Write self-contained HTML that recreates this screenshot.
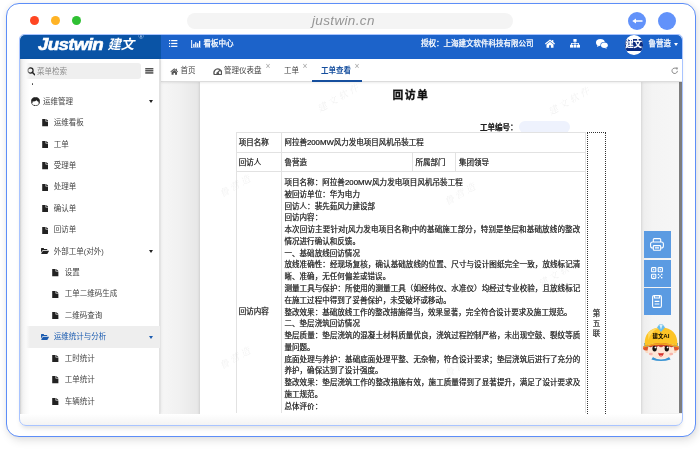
<!DOCTYPE html>
<html lang="zh-CN">
<head>
<meta charset="utf-8">
<title>回访单 - Justwin 建文</title>
<style>
html,body{margin:0;padding:0;}
body{width:700px;height:454px;overflow:hidden;background:#fff;position:relative;
  font-family:"Liberation Sans","Noto Sans CJK SC",sans-serif;font-size:7.5px;color:#333;}
*{box-sizing:border-box;}
.abs{position:absolute;}
/* outer browser frame */
#frame{position:absolute;left:6px;top:3px;width:690px;height:434px;border:1.4px solid #5d8ef8;border-radius:13px;background:#fff;
  box-shadow:2px 4px 8px rgba(0,0,0,0.10),0 0 6px rgba(0,0,0,0.06);}
.dot{position:absolute;width:9px;height:9px;border-radius:50%;top:16px;}
#pill{position:absolute;left:187px;top:13px;width:326px;height:16px;border-radius:8px;background:#f4f4f4;}
#url{will-change:transform;position:absolute;left:312px;top:12.5px;height:16px;line-height:16px;white-space:nowrap;font-size:13.5px;font-style:italic;color:#959595;letter-spacing:0.35px;}
.cbtn{position:absolute;width:18px;height:18px;border-radius:50%;background:#6292fa;top:12px;}
/* inner card */
#card{position:absolute;left:19px;top:34px;width:664px;height:392px;border:1px solid #a9c4ff;border-radius:5px 5px 7px 7px;
  background:linear-gradient(#fff 0,#fff 379px,#f1f1f1 392px);box-shadow:0 4px 5px -2px rgba(0,0,0,0.13);}
#shot{position:absolute;left:20px;top:35px;width:662px;height:378.6px;overflow:hidden;filter:blur(0.4px);will-change:transform;border-radius:5px 5px 0 0;background:#f0f0f0;}
/* header */
#logo{position:absolute;left:0;top:0;width:141px;height:24px;background:#0a54a6;}
#hdr{position:absolute;left:141px;top:0;width:521px;height:24px;background:#1c63ca;}
#logo .jw{position:absolute;left:17.5px;top:0;height:23px;line-height:19.5px;font-family:"Liberation Sans",sans-serif;font-weight:bold;font-style:italic;font-size:17px;color:#fff;letter-spacing:-0.6px;-webkit-text-stroke:0.6px #fff;transform:scaleX(1.1);transform-origin:0 0;}
#logo .cn{position:absolute;left:87.5px;top:0;height:23px;line-height:19px;font-family:"Liberation Sans","Noto Sans CJK SC",sans-serif;font-weight:700;font-style:italic;font-size:13.3px;color:#fff;letter-spacing:0;}
#logo .reg{position:absolute;left:118.5px;top:-2.5px;font-size:7px;color:#b9cfee;}
.ht{position:absolute;color:#fff;font-size:7.5px;line-height:10px;white-space:nowrap;-webkit-text-stroke:0.25px #fff;}
/* sidebar */
#side{position:absolute;left:0;top:23.5px;width:140px;height:355px;background:#fff;border-right:1px solid #e2e2e2;box-shadow:1px 0 3px rgba(0,0,0,0.08);}
#search{position:absolute;left:2.5px;top:4.7px;width:118.5px;height:16px;border-radius:3px;background:#efefef;}
#search span{position:absolute;left:14.6px;top:0.6px;line-height:16px;color:#8d8d8d;font-size:7.5px;}
.mi{position:absolute;left:0;width:140px;height:21.5px;line-height:21.5px;font-size:7.5px;color:#444;white-space:nowrap;}
.mi svg{position:absolute;}
.mi .car{position:absolute;left:128.6px;top:9.6px;width:0;height:0;border-left:2.8px solid transparent;border-right:2.8px solid transparent;border-top:3.2px solid #222;}
/* tabs */
#tabs{position:absolute;left:141px;top:24px;width:521px;height:23px;background:#fff;border-bottom:1px solid #dcdcdc;box-shadow:0 1px 2px rgba(0,0,0,0.08);}
.tab{position:absolute;top:1.3px;height:22px;line-height:22.5px;font-size:7.5px;color:#444;white-space:nowrap;}
.tx{position:absolute;top:2.6px;font-size:8.5px;line-height:8px;color:#a5a5a5;}
/* page */
#page{position:absolute;left:180px;top:47px;width:440.5px;height:340px;background:#fff;box-shadow:0 0 3px rgba(0,0,0,0.18);}
#rgray{position:absolute;left:621px;top:47px;width:38px;height:331px;background:linear-gradient(90deg,#ececec 0,#f4f4f4 30%,#f6f6f6 100%);}
#sbar{position:absolute;left:659px;top:47px;width:3px;height:331px;background:#7d7d7d;}
table{border-collapse:collapse;}
.doc{position:absolute;font-size:7.5px;color:#1a1a1a;-webkit-text-stroke:0.22px #1a1a1a;white-space:nowrap;line-height:11.77px;}
.jl{text-align:justify;text-align-last:justify;}
.ln{position:absolute;background:#e2e2e2;}
.fbtn{position:absolute;left:623.5px;width:27px;height:27px;background:#5b9be2;}
.wm{position:absolute;height:14px;line-height:14px;text-align:center;font-family:"Liberation Serif","Noto Serif CJK SC",serif;font-style:italic;font-size:9.5px;color:#000;opacity:0.055;transform:rotate(-30deg);white-space:nowrap;letter-spacing:2.5px;}
</style>
</head>
<body>
<div id="frame"></div>
<div class="dot" style="left:30px;background:#ff4622;"></div>
<div class="dot" style="left:51px;background:#ffb325;"></div>
<div class="dot" style="left:71.5px;background:#2fc033;"></div>
<div id="pill"></div>
<div id="url">justwin.cn</div>
<div class="cbtn" style="left:628px;">
  <svg class="abs" style="left:3.5px;top:6px" width="11" height="6" viewBox="0 0 11 6"><path d="M0.3 3 L4 0.6 L4 2.2 L10.5 2.2 L10.5 3.8 L4 3.8 L4 5.4 Z" fill="#fff"/></svg>
</div>
<div class="cbtn" style="left:657.5px;"></div>

<div id="card"></div>
<div id="shot">
  <!-- content bg / page -->
  <div class="abs" style="left:141px;top:47px;width:40px;height:332px;background:linear-gradient(90deg,#f6f6f6 0,#f1f1f1 45%,#e6e6e6 100%);"></div>
  <div id="rgray"></div>
  <div id="page"></div>
  <div id="sbar"></div>
<!--DOC-->
  <!-- document -->
  <div class="abs" style="left:372.6px;top:53.3px;line-height:15px;font-size:10.8px;font-weight:bold;letter-spacing:1.4px;color:#111;-webkit-text-stroke:0.3px #111;white-space:nowrap;">回访单</div>
  <div class="doc" style="left:460px;top:87.2px;font-weight:bold;color:#222;">工单编号：</div>
  <div class="abs" style="left:499px;top:86px;width:51px;height:11.5px;border-radius:6px;background:#eef2fd;"></div>
  <div class="ln" style="left:215.5px;top:97.3px;width:349.5px;height:1px;"></div>
  <div class="ln" style="left:215.5px;top:116.7px;width:349.5px;height:1px;"></div>
  <div class="ln" style="left:215.5px;top:136px;width:349.5px;height:1px;"></div>
  <div class="ln" style="left:215.5px;top:97.3px;width:1px;height:280.7px;"></div>
  <div class="ln" style="left:260.5px;top:97.3px;width:1px;height:280.7px;"></div>
  <div class="ln" style="left:565px;top:97.3px;width:1px;height:280.7px;"></div>
  <div class="ln" style="left:392px;top:116.7px;width:1px;height:19.299999999999997px;"></div>
  <div class="ln" style="left:435.2px;top:116.7px;width:1px;height:19.299999999999997px;"></div>
  <div class="abs" style="left:566.6px;top:96.8px;width:19.6px;height:290px;border:1.2px dotted #333;"></div>
  <div class="doc" style="left:572.7px;top:273.6px;line-height:10.05px;width:8px;white-space:normal;color:#333;">第五联</div>
  <div class="doc" style="left:218.7px;top:102.2px;">项目名称</div>
  <div class="doc" style="left:264.4px;top:102.2px;">阿拉善<span style="font-size:7.8px">200MW</span>风力发电项目风机吊装工程</div>
  <div class="doc" style="left:218.7px;top:121.9px;">回访人</div>
  <div class="doc" style="left:264.4px;top:121.9px;">鲁营造</div>
  <div class="doc" style="left:395.5px;top:121.9px;">所属部门</div>
  <div class="doc" style="left:439px;top:121.9px;">集团领导</div>
  <div class="doc" style="left:218.7px;top:271.1px;">回访内容</div>
  <div class="doc" style="left:264.4px;top:142.1px;width:295.9px;"><div style="letter-spacing:0.06px">项目名称：阿拉善<span style="font-size:7.8px">200MW</span>风力发电项目风机吊装工程</div><div style="letter-spacing:0.06px">被回访单位：华为电力</div><div style="letter-spacing:0.06px">回访人：裴先茹风力建设部</div><div style="letter-spacing:0.06px">回访内容：</div><div class="jl">本次回访主要针对[风力发电项目名称]中的基础施工部分，特别是垫层和基础放线的整改</div><div style="letter-spacing:0.06px">情况进行确认和反馈。</div><div style="letter-spacing:0.06px">一、基础放线回访情况</div><div class="jl">放线准确性：经现场复核，确认基础放线的位置、尺寸与设计图纸完全一致，放线标记清</div><div style="letter-spacing:0.06px">晰、准确，无任何偏差或错误。</div><div class="jl">测量工具与保护：所使用的测量工具（如经纬仪、水准仪）均经过专业校验，且放线标记</div><div style="letter-spacing:0.06px">在施工过程中得到了妥善保护，未受破坏或移动。</div><div style="letter-spacing:0.06px">整改效果：基础放线工作的整改措施得当，效果显著，完全符合设计要求及施工规范。</div><div style="letter-spacing:0.06px">二、垫层浇筑回访情况</div><div class="jl">垫层质量：垫层浇筑的混凝土材料质量优良，浇筑过程控制严格，未出现空鼓、裂纹等质</div><div style="letter-spacing:0.06px">量问题。</div><div class="jl">底面处理与养护：基础底面处理平整、无杂物，符合设计要求；垫层浇筑后进行了充分的</div><div style="letter-spacing:0.06px">养护，确保达到了设计强度。</div><div class="jl">整改效果：垫层浇筑工作的整改措施有效，施工质量得到了显著提升，满足了设计要求及</div><div style="letter-spacing:0.06px">施工规范。</div><div style="letter-spacing:0.06px">总体评价：</div></div>
  <div class="wm" style="left:294.0px;top:56px;width:50px;">建文软件</div>
  <div class="wm" style="left:525.0px;top:59px;width:50px;">建文软件</div>
  <div class="wm" style="left:198.0px;top:144px;width:36px;">鲁营造</div>
  <div class="wm" style="left:423.0px;top:152px;width:36px;">鲁营造</div>
  <div class="wm" style="left:288.0px;top:230px;width:50px;">建文软件</div>
  <div class="wm" style="left:515.0px;top:231px;width:50px;">建文软件</div>
  <div class="wm" style="left:198.0px;top:316px;width:36px;">鲁营造</div>
  <div class="wm" style="left:423.0px;top:324px;width:36px;">鲁营造</div>
  <!-- float buttons -->
  <div class="fbtn" style="top:196px;"><svg class="abs" style="left:6.5px;top:7px" width="14" height="13" viewBox="0 0 14 13"><g fill="none" stroke="#fff" stroke-width="1.1"><path d="M3.3 4 L3.3 1.6 Q3.3 0.6 4.3 0.6 L9.7 0.6 Q10.7 0.6 10.7 1.6 L10.7 4"/><rect x="0.6" y="4" width="12.8" height="6" rx="2"/><rect x="3.3" y="7.6" width="7.4" height="4.6" rx="0.8" fill="#5b9be2"/><path d="M5 9.9 L9 9.9"/></g></svg></div>
  <div class="fbtn" style="top:224.6px;"><svg class="abs" style="left:7.5px;top:7.5px" width="12" height="12" viewBox="0 0 12 12"><g fill="none" stroke="#fff" stroke-width="1.1"><rect x="0.6" y="0.6" width="4.2" height="4.2" rx="0.6"/><rect x="7.2" y="0.6" width="4.2" height="4.2" rx="0.6"/><rect x="0.6" y="7.2" width="4.2" height="4.2" rx="0.6"/></g><g fill="#fff"><rect x="2.1" y="2.1" width="1.2" height="1.2"/><rect x="8.7" y="2.1" width="1.2" height="1.2"/><rect x="2.1" y="8.7" width="1.2" height="1.2"/><rect x="6.8" y="6.8" width="1.4" height="1.4"/><rect x="10" y="6.8" width="1.4" height="1.4"/><rect x="8.4" y="8.4" width="1.4" height="1.4"/><rect x="6.8" y="10" width="1.4" height="1.4"/><rect x="10" y="10" width="1.4" height="1.4"/></g></svg></div>
  <div class="fbtn" style="top:253.2px;"><svg class="abs" style="left:8.5px;top:7px" width="10" height="13" viewBox="0 0 10 13"><g fill="none" stroke="#fff" stroke-width="1.1"><rect x="0.6" y="0.6" width="8.8" height="11.8" rx="1.4"/><path d="M2.4 0.8 L2.4 3 L7.6 3 L7.6 0.8"/><path d="M2.6 6.4 L7.4 6.4 M2.6 9 L7.4 9"/></g></svg></div>
  <!-- mascot -->
  <svg class="abs" style="left:616px;top:281px" width="50" height="50" viewBox="0 0 50 50">
    <!-- collar / body -->
    <path d="M17 41 Q25 46 33 41 L34.6 43.4 Q25 46.6 15.4 43.4 Z" fill="#3b94d3"/>
    <!-- ears -->
    <ellipse cx="11.2" cy="34.6" rx="2.2" ry="2.6" fill="#f8d9c2"/>
    <ellipse cx="38.8" cy="34.6" rx="2.2" ry="2.6" fill="#f8d9c2"/>
    <!-- face -->
    <ellipse cx="25" cy="34" rx="13.4" ry="8.8" fill="#fde6d6"/>
    <!-- hair fringe -->
    <path d="M12 29.6 Q25 23.6 38 29.6 Q36.4 32.2 33.4 30.4 Q30 32.4 27.5 30 Q25 32.4 22.5 30 Q19.4 32.4 16.6 30.4 Q13.6 32.2 12 29.6 Z" fill="#c8402c"/>
    <!-- strap/ear flaps -->
    <path d="M7.5 30 L12.5 30 L11.5 34.5 Q8.5 35 7 33 Z" fill="#e2572c"/>
    <path d="M42.5 30 L37.5 30 L38.5 34.5 Q41.5 35 43 33 Z" fill="#e2572c"/>
    <path d="M8 27 L12 27 L12.5 31 L8.5 31 Z" fill="#4a9fd8"/>
    <path d="M42 27 L38 27 L37.5 31 L41.5 31 Z" fill="#4a9fd8"/>
    <!-- helmet dome -->
    <path d="M8.6 29.5 Q8 12 25 11.2 Q42 12 41.4 29.5 Q25 24.5 8.6 29.5 Z" fill="#fdc426"/>
    <path d="M8.6 29.5 Q25 24.5 41.4 29.5 L42.6 31.4 Q25 26.2 7.4 31.4 Z" fill="#f3a51c"/>
    <path d="M12 17 Q17 12 24 11.6 Q15 15 12.5 24 Z" fill="#ffe071" opacity="0.8"/>
    <!-- crest -->
    <path d="M21 11.5 L23.2 8.6 L26.8 8.6 L29 11.5 L25 16 Z" fill="#6bbdea"/>
    <path d="M23.4 9 L25 13.6 L26.6 9 Z" fill="#d9effb"/>
    <!-- helmet text -->
    <text x="25" y="22.2" text-anchor="middle" font-family="'Liberation Sans','Noto Sans CJK SC',sans-serif" font-weight="900" font-size="5.4" fill="#1a1200">建文<tspan font-size="6.2" font-weight="bold">AI</tspan></text>
    <!-- eyes -->
    <ellipse cx="18.6" cy="32.6" rx="2.2" ry="2.9" fill="#15100e"/>
    <ellipse cx="30.8" cy="32.6" rx="2.2" ry="2.9" fill="#15100e"/>
    <circle cx="19.4" cy="31.4" r="0.9" fill="#fff"/>
    <circle cx="31.6" cy="31.4" r="0.9" fill="#fff"/>
    <!-- cheeks -->
    <ellipse cx="14.8" cy="38" rx="2" ry="1.2" fill="#f7a9a0" opacity="0.8"/>
    <ellipse cx="35.2" cy="38" rx="2" ry="1.2" fill="#f7a9a0" opacity="0.8"/>
    <!-- mouth -->
    <path d="M22.2 36.8 Q25 37.8 27.8 36.8 Q27.2 40.6 25 40.6 Q22.8 40.6 22.2 36.8 Z" fill="#d5322a"/>
    <path d="M23.6 39.4 Q25 38.6 26.4 39.4 Q25.8 40.5 25 40.5 Q24.2 40.5 23.6 39.4 Z" fill="#f58a8a"/>
  </svg>
<!--/DOC-->

  <div class="abs" style="left:0;top:24px;width:10px;height:360px;background:linear-gradient(90deg,#cdcdcd 0,#e6e6e6 1.2px,#f3f3f3 3px,#fafafa 6px,rgba(255,255,255,0) 10px);z-index:5;"></div>
  <!-- header -->
  <div id="logo"><span class="jw">Justwin</span><span class="cn">建文</span><span class="reg">®</span></div>
  <div id="hdr"></div>
  <svg class="abs" style="left:149.4px;top:5.3px" width="8.4" height="7.2" viewBox="0 0 7 6"><g fill="#fff"><rect x="0" y="0" width="1" height="1"/><rect x="1.8" y="0" width="5.2" height="1"/><rect x="0" y="2.4" width="1" height="1"/><rect x="1.8" y="2.4" width="5.2" height="1"/><rect x="0" y="4.8" width="1" height="1"/><rect x="1.8" y="4.8" width="5.2" height="1"/></g></svg>
  <svg class="abs" style="left:171.4px;top:4.6px" width="10" height="8.6" viewBox="0 0 9 8"><g fill="#fff"><rect x="0" y="0" width="0.9" height="8"/><rect x="0" y="7.1" width="9" height="0.9"/><rect x="1.9" y="3.6" width="1.2" height="3"/><rect x="3.7" y="2" width="1.2" height="4.6"/><rect x="5.5" y="3" width="1.2" height="3.6"/><rect x="7.3" y="0.8" width="1.2" height="5.8"/></g></svg>
  <div class="ht" style="left:183.5px;top:3.7px;">看板中心</div>
  <div class="ht" style="left:401px;top:3.9px;">授权：上海建文软件科技有限公司</div>
  <!-- home -->
  <svg class="abs" style="left:525px;top:4px" width="10" height="9" viewBox="0 0 10 9"><path d="M5 0.4 L0 4.6 L0.7 5.4 L5 1.9 L9.3 5.4 L10 4.6 L8.3 3.1 L8.3 0.9 L7.1 0.9 L7.1 2.1 Z M5 2.7 L1.5 5.6 L1.5 8.7 L4.1 8.7 L4.1 6.3 L5.9 6.3 L5.9 8.7 L8.5 8.7 L8.5 5.6 Z" fill="#fff"/></svg>
  <!-- sitemap -->
  <svg class="abs" style="left:550px;top:4px" width="10" height="9" viewBox="0 0 10 9"><g fill="#fff"><rect x="3.4" y="0" width="3.2" height="2.8"/><rect x="4.6" y="2.8" width="0.8" height="1.6"/><rect x="1.2" y="4" width="7.6" height="0.8"/><rect x="1.2" y="4" width="0.8" height="2"/><rect x="8" y="4" width="0.8" height="2"/><rect x="4.6" y="4" width="0.8" height="2"/><rect x="0" y="5.8" width="3" height="2.8"/><rect x="3.5" y="5.8" width="3" height="2.8"/><rect x="7" y="5.8" width="3" height="2.8"/></g></svg>
  <!-- wechat -->
  <svg class="abs" style="left:576px;top:3.6px" width="12" height="10" viewBox="0 0 12 10"><ellipse cx="4.4" cy="3.6" rx="4.4" ry="3.5" fill="#fff"/><path d="M1.6 6 L1 8 L3.4 6.8 Z" fill="#fff"/><ellipse cx="8.3" cy="6.2" rx="3.9" ry="3.1" fill="#1c63ca"/><ellipse cx="8.4" cy="6.3" rx="3.4" ry="2.7" fill="#fff"/><path d="M10 8.4 L11 9.8 L8.6 8.9 Z" fill="#fff"/></svg>
  <!-- avatar -->
  <div class="abs" style="left:605px;top:0.3px;width:17.6px;height:19.4px;border-radius:50%;background:#fff;overflow:hidden;">
    <div class="abs" style="left:0;top:4.2px;width:18px;height:11.3px;background:#0b2c80"></div>
    <div class="abs" style="left:0.2px;top:4px;width:18px;line-height:11.4px;font-size:8.6px;font-weight:900;color:#fff;letter-spacing:-0.2px;white-space:nowrap;">建文</div>
  </div>
  <div class="ht" style="left:628.6px;top:3.9px;">鲁营造</div>
  <div class="abs" style="left:653.5px;top:7.6px;width:0;height:0;border-left:2.5px solid transparent;border-right:2.5px solid transparent;border-top:3.2px solid #fff;"></div>

  <!-- tabs -->
  <div id="tabs">
    <svg class="abs" style="left:8.6px;top:8.8px" width="8.6" height="7" viewBox="0 0 10 9"><path d="M5 0.4 L0 4.6 L0.7 5.4 L5 1.9 L9.3 5.4 L10 4.6 L8.3 3.1 L8.3 0.9 L7.1 0.9 L7.1 2.1 Z M5 2.7 L1.5 5.6 L1.5 8.7 L4.1 8.7 L4.1 6.3 L5.9 6.3 L5.9 8.7 L8.5 8.7 L8.5 5.6 Z" fill="#555"/></svg>
    <div class="tab" style="left:19.5px;">首页</div>
    <svg class="abs" style="left:51.6px;top:8.6px" width="9.6" height="7.4" viewBox="0 0 9 7"><path d="M4.5 0.2 A4.4 4.4 0 0 0 0.8 6.8 L8.2 6.8 A4.4 4.4 0 0 0 4.5 0.2 Z" fill="#555"/><path d="M4.5 1.5 A3.1 3.1 0 0 0 1.6 5.6 L3.2 5.6 A1.4 1.4 0 0 1 4.1 3.7 L5.9 1.9 A3.1 3.1 0 0 0 4.5 1.5 Z M6.7 2.6 L5.3 4.2 A1.4 1.4 0 0 1 5.8 5.6 L7.4 5.6 A3.1 3.1 0 0 0 6.7 2.6 Z" fill="#fff"/></svg>
    <div class="tab" style="left:63px;">管理仪表盘</div><div class="tx" style="left:104.5px;">×</div>
    <div class="tab" style="left:123px;">工单</div><div class="tx" style="left:141.5px;">×</div>
    <div class="abs" style="left:151px;top:0;width:50px;height:23px;border-bottom:2px solid #164f9e;"></div>
    <div class="tab" style="left:160px;font-weight:bold;color:#164f9e;">工单查看</div><div class="tx" style="left:193.5px;">×</div>
    <svg class="abs" style="left:510.4px;top:8.3px" width="7.6" height="7.6" viewBox="0 0 7 7"><path d="M5.9 3.6 A2.5 2.5 0 1 1 4.9 1.5" fill="none" stroke="#8a8a8a" stroke-width="0.9"/><path d="M4.1 0.2 L6.6 0.6 L5.5 2.8 Z" fill="#8a8a8a"/></svg>
  </div>

  <!-- sidebar -->
  <div id="side">
    <div id="search">
      <svg class="abs" style="left:4px;top:4.2px" width="8.4" height="8.4" viewBox="0 0 8 8"><circle cx="3.3" cy="3.3" r="2.5" fill="none" stroke="#222" stroke-width="1.15"/><path d="M5 5 L7.4 7.4" stroke="#222" stroke-width="1.4" stroke-linecap="round"/></svg>
      <span>菜单检索</span>
    </div>
    <svg class="abs" style="left:125px;top:9.4px" width="8.6" height="6.6" viewBox="0 0 8 6.5"><g fill="#555"><rect x="0" y="0" width="8" height="1.3"/><rect x="0" y="1.75" width="8" height="1.3"/><rect x="0" y="3.5" width="8" height="1.3"/><rect x="0" y="5.2" width="8" height="1.3"/></g></svg>
    <div class="abs" style="left:11.6px;top:24.8px;width:1.3px;height:1.3px;background:#444;border-radius:50%"></div>
<!--SIDE-->
    <div class="mi" style="top:32.19px;"><svg style="left:10.5px;top:6.1px" width="9" height="9.5" viewBox="0 0 18 19"><circle cx="9" cy="9" r="8.2" fill="#fff" stroke="#222" stroke-width="1.4"/><path d="M9 0.8 A8.2 8.2 0 0 1 17.2 9 Q17.2 12 15.6 14 L15 9.5 Q12.5 9 11 6.5 Q8.5 9.5 3.2 9.2 L3 12.5 Q0.8 11.5 0.8 9 A8.2 8.2 0 0 1 9 0.8 Z" fill="#222"/><path d="M6 15.5 L6 18.6 L9 18.6 Z" fill="#222"/></svg><span style="position:absolute;left:23px;top:0;">运维管理</span><i class="car" style="border-top-color:#222"></i></div>
    <div class="mi" style="top:53.61px;"><svg style="left:21.6px;top:7.3px" width="6.6" height="7.3" viewBox="0 0 11 13"><path d="M0 0 L6 0 L6 4.5 L11 4.5 L11 13 L0 13 Z M7.2 0 L11 3.4 L7.2 3.4 Z" fill="#222"/></svg><span style="position:absolute;left:33.7px;top:0;">运维看板</span></div>
    <div class="mi" style="top:75.03px;"><svg style="left:21.6px;top:7.3px" width="6.6" height="7.3" viewBox="0 0 11 13"><path d="M0 0 L6 0 L6 4.5 L11 4.5 L11 13 L0 13 Z M7.2 0 L11 3.4 L7.2 3.4 Z" fill="#222"/></svg><span style="position:absolute;left:33.7px;top:0;">工单</span></div>
    <div class="mi" style="top:96.45px;"><svg style="left:21.6px;top:7.3px" width="6.6" height="7.3" viewBox="0 0 11 13"><path d="M0 0 L6 0 L6 4.5 L11 4.5 L11 13 L0 13 Z M7.2 0 L11 3.4 L7.2 3.4 Z" fill="#222"/></svg><span style="position:absolute;left:33.7px;top:0;">受理单</span></div>
    <div class="mi" style="top:117.87px;"><svg style="left:21.6px;top:7.3px" width="6.6" height="7.3" viewBox="0 0 11 13"><path d="M0 0 L6 0 L6 4.5 L11 4.5 L11 13 L0 13 Z M7.2 0 L11 3.4 L7.2 3.4 Z" fill="#222"/></svg><span style="position:absolute;left:33.7px;top:0;">处理单</span></div>
    <div class="mi" style="top:139.29px;"><svg style="left:21.6px;top:7.3px" width="6.6" height="7.3" viewBox="0 0 11 13"><path d="M0 0 L6 0 L6 4.5 L11 4.5 L11 13 L0 13 Z M7.2 0 L11 3.4 L7.2 3.4 Z" fill="#222"/></svg><span style="position:absolute;left:33.7px;top:0;">确认单</span></div>
    <div class="mi" style="top:160.71px;"><svg style="left:21.6px;top:7.3px" width="6.6" height="7.3" viewBox="0 0 11 13"><path d="M0 0 L6 0 L6 4.5 L11 4.5 L11 13 L0 13 Z M7.2 0 L11 3.4 L7.2 3.4 Z" fill="#222"/></svg><span style="position:absolute;left:33.7px;top:0;">回访单</span></div>
    <div class="mi" style="top:182.13px;"><svg style="left:20.5px;top:7.8px" width="8" height="6" viewBox="0 0 16 12"><path d="M0 1.2 Q0 0 1.2 0 L4.8 0 Q6 0 6 1.2 L6 1.8 L11.4 1.8 Q12.6 1.8 12.6 3 L12.6 4.2 L4.4 4.2 Q3.2 4.2 2.6 5.2 L0 9.6 Z M4.6 5.4 L15.4 5.4 Q16.4 5.4 15.8 6.4 L13.2 11 Q12.6 12 11.6 12 L1 12 Q0 12 0.6 11 L3.2 6.4 Q3.8 5.4 4.6 5.4 Z" fill="#222"/></svg><span style="position:absolute;left:33.7px;top:0;">外部工单(对外)</span><i class="car" style="border-top-color:#222"></i></div>
    <div class="mi" style="top:203.55px;"><svg style="left:32.1px;top:7.3px" width="6.6" height="7.3" viewBox="0 0 11 13"><path d="M0 0 L6 0 L6 4.5 L11 4.5 L11 13 L0 13 Z M7.2 0 L11 3.4 L7.2 3.4 Z" fill="#222"/></svg><span style="position:absolute;left:44.7px;top:0;">设置</span></div>
    <div class="mi" style="top:224.97px;"><svg style="left:32.1px;top:7.3px" width="6.6" height="7.3" viewBox="0 0 11 13"><path d="M0 0 L6 0 L6 4.5 L11 4.5 L11 13 L0 13 Z M7.2 0 L11 3.4 L7.2 3.4 Z" fill="#222"/></svg><span style="position:absolute;left:44.7px;top:0;">工单二维码生成</span></div>
    <div class="mi" style="top:246.39px;"><svg style="left:32.1px;top:7.3px" width="6.6" height="7.3" viewBox="0 0 11 13"><path d="M0 0 L6 0 L6 4.5 L11 4.5 L11 13 L0 13 Z M7.2 0 L11 3.4 L7.2 3.4 Z" fill="#222"/></svg><span style="position:absolute;left:44.7px;top:0;">二维码查询</span></div>
    <div class="mi" style="top:267.81px;background:#eeeeee;color:#1a5bb0;"><svg style="left:20.5px;top:7.8px" width="8" height="6" viewBox="0 0 16 12"><path d="M0 1.2 Q0 0 1.2 0 L4.8 0 Q6 0 6 1.2 L6 1.8 L11.4 1.8 Q12.6 1.8 12.6 3 L12.6 4.2 L4.4 4.2 Q3.2 4.2 2.6 5.2 L0 9.6 Z M4.6 5.4 L15.4 5.4 Q16.4 5.4 15.8 6.4 L13.2 11 Q12.6 12 11.6 12 L1 12 Q0 12 0.6 11 L3.2 6.4 Q3.8 5.4 4.6 5.4 Z" fill="#1a5bb0"/></svg><span style="position:absolute;left:33.7px;top:0;">运维统计与分析</span><i class="car" style="border-top-color:#1a5bb0"></i></div>
    <div class="mi" style="top:289.23px;"><svg style="left:32.1px;top:7.3px" width="6.6" height="7.3" viewBox="0 0 11 13"><path d="M0 0 L6 0 L6 4.5 L11 4.5 L11 13 L0 13 Z M7.2 0 L11 3.4 L7.2 3.4 Z" fill="#222"/></svg><span style="position:absolute;left:44.7px;top:0;">工时统计</span></div>
    <div class="mi" style="top:310.65px;"><svg style="left:32.1px;top:7.3px" width="6.6" height="7.3" viewBox="0 0 11 13"><path d="M0 0 L6 0 L6 4.5 L11 4.5 L11 13 L0 13 Z M7.2 0 L11 3.4 L7.2 3.4 Z" fill="#222"/></svg><span style="position:absolute;left:44.7px;top:0;">工单统计</span></div>
    <div class="mi" style="top:332.07px;"><svg style="left:32.1px;top:7.3px" width="6.6" height="7.3" viewBox="0 0 11 13"><path d="M0 0 L6 0 L6 4.5 L11 4.5 L11 13 L0 13 Z M7.2 0 L11 3.4 L7.2 3.4 Z" fill="#222"/></svg><span style="position:absolute;left:44.7px;top:0;">车辆统计</span></div>
<!--/SIDE-->
  </div>
</div>
</body>
</html>
